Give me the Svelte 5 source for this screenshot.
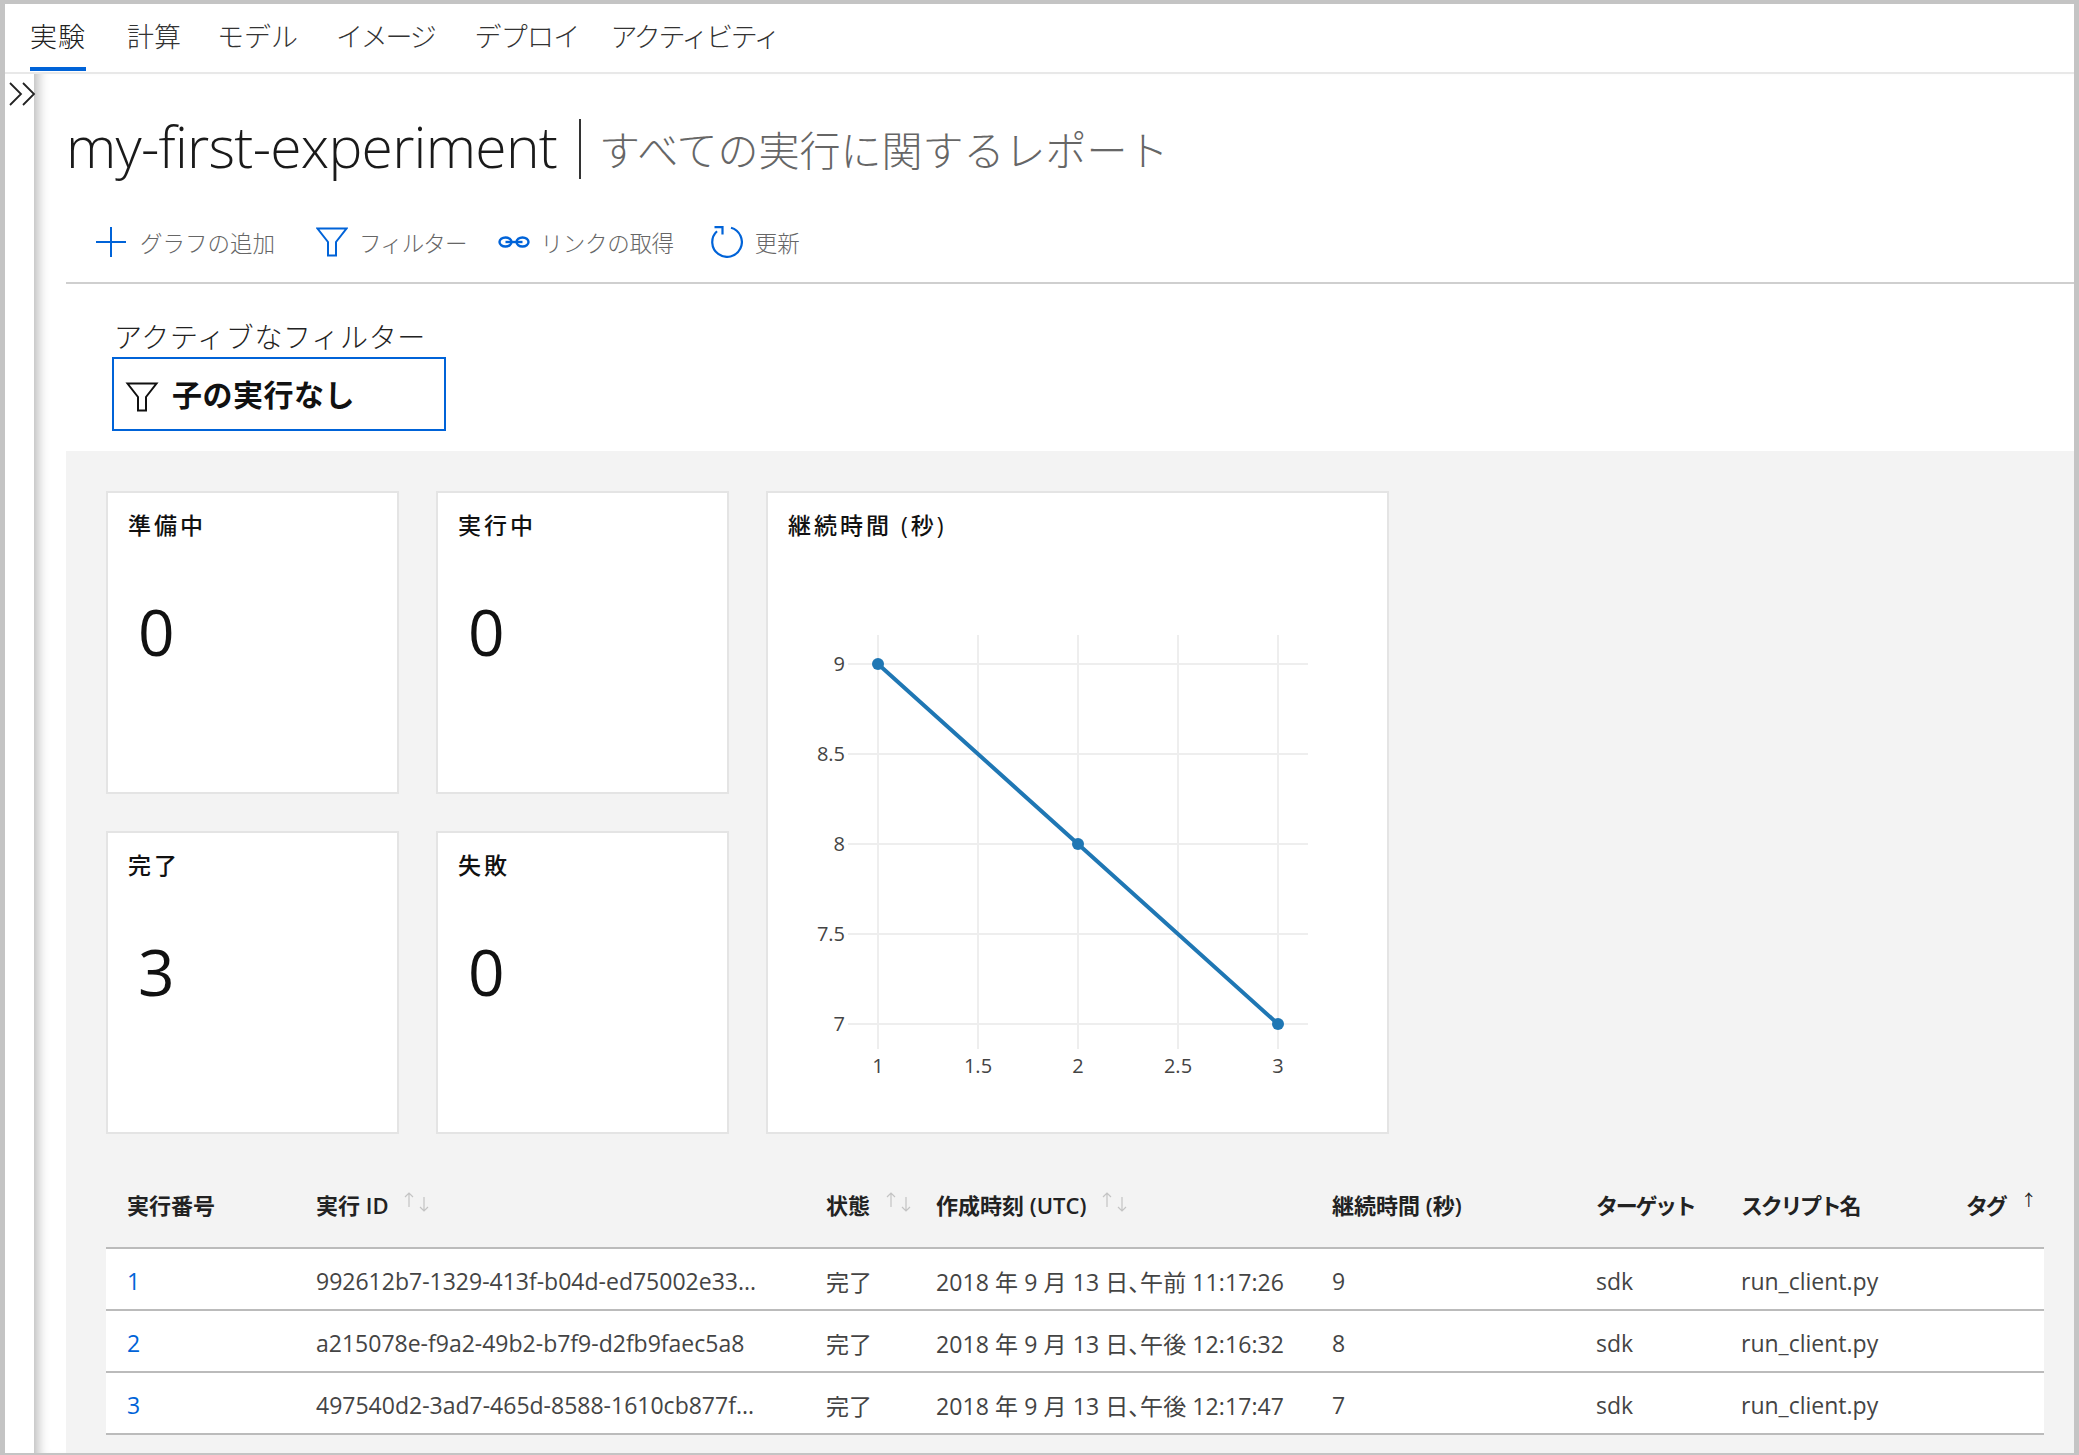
<script>
	// ls / gap tune each tab to the width it has in the product font
	const nav = [
		{ label: '実験', ls: 1, gap: 41 },
		{ label: '計算', ls: 0, gap: 36 },
		{ label: 'モデル', ls: 0, gap: 38 },
		{ label: 'イメージ', ls: -2.25, gap: 40 },
		{ label: 'デプロイ', ls: -0.75, gap: 31 },
		{ label: 'アクティビティ', ls: -2.35, gap: 0 }
	];
	const stats = [
		{ label: '準備中', value: 0 },
		{ label: '実行中', value: 0 },
		{ label: '完了', value: 3 },
		{ label: '失敗', value: 0 }
	];
	const runs = [
		{ no: 1, id: '992612b7-1329-413f-b04d-ed75002e33...', date: '2018 年 9 月 13 日、午前 11:17:26', secs: 9 },
		{ no: 2, id: 'a215078e-f9a2-49b2-b7f9-d2fb9faec5a8', date: '2018 年 9 月 13 日、午後 12:16:32', secs: 8 },
		{ no: 3, id: '497540d2-3ad7-465d-8588-1610cb877f...', date: '2018 年 9 月 13 日、午後 12:17:47', secs: 7 }
	];

	// chart geometry, in px inside the svg
	const xs = [
		{ label: '1', x: 112 },
		{ label: '1.5', x: 212 },
		{ label: '2', x: 312 },
		{ label: '2.5', x: 412 },
		{ label: '3', x: 512 }
	];
	const ys = [
		{ label: '9', y: 45 },
		{ label: '8.5', y: 135 },
		{ label: '8', y: 225 },
		{ label: '7.5', y: 315 },
		{ label: '7', y: 405 }
	];
	const points = [
		[112, 45],
		[312, 225],
		[512, 405]
	];
</script>

{#snippet funnel(cls)}
	<svg class={cls} viewBox="0 0 32 30" fill="none" stroke="currentColor" stroke-width="2">
		<path d="M1.5 1.5h29L20 15v13.5h-8V15z" />
	</svg>
{/snippet}

{#snippet sorter()}
	<svg class="sorter" viewBox="0 0 25 20" fill="none" stroke="#c4c4c4" stroke-width="1.2">
		<path d="M5 15V1M1 5l4-4 4 4M20 5v14M16 15l4 4 4-4" />
	</svg>
{/snippet}

<div class="frame">
	<nav class="tabs">
		{#each nav as item, i}
			<span class="tab" class:active={i === 0} style="letter-spacing:{item.ls}px;margin-right:{item.gap}px">{item.label}</span>
		{/each}
	</nav>

	<div class="body">
		<aside class="rail">
			<svg class="chevrons" viewBox="0 0 27 24" fill="none" stroke="#222" stroke-width="1.8">
				<path d="M1 1l11 11L1 23M14 1l11 11-11 11" />
			</svg>
		</aside>

		<main class="main">
			<h1 class="title">
				<span class="name">my-first-experiment</span>
				<span class="bar"></span>
				<span class="sub">すべての実行に関するレポート</span>
			</h1>

			<div class="toolbar">
				<button class="tool add">
					<svg viewBox="0 0 30 30" fill="none" stroke="currentColor" stroke-width="2"><path d="M15 0v30M0 15h30" /></svg>
					<span>グラフの追加</span>
				</button>
				<button class="tool filter">
					{@render funnel('tool-funnel')}
					<span>フィルター</span>
				</button>
				<button class="tool link">
					<svg viewBox="0 0 32 12" fill="none" stroke="currentColor" stroke-width="2.4">
						<ellipse cx="7.5" cy="6" rx="6" ry="4.5" />
						<ellipse cx="24.5" cy="6" rx="6" ry="4.5" />
						<path d="M7.5 6h17" />
					</svg>
					<span>リンクの取得</span>
				</button>
				<button class="tool refresh">
					<svg viewBox="0 0 32 32" fill="none" stroke="currentColor" stroke-width="2.2">
						<path d="M20 1.8A14.8 14.8 0 1 1 6 5.2" />
						<path d="M3.5 1.2h8V8.5" />
					</svg>
					<span>更新</span>
				</button>
			</div>

			<section class="active-filters">
				<div class="af-label">アクティブなフィルター</div>
				<div class="af-box">
					{@render funnel('af-funnel')}
					<span>子の実行なし</span>
				</div>
			</section>

			<section class="panel">
				<div class="cards">
					{#each stats as s}
						<div class="card">
							<div class="card-title">{s.label}</div>
							<div class="card-value">{s.value}</div>
						</div>
					{/each}
					<div class="card chart">
						<div class="card-title">継続時間 (秒)</div>
						<svg class="plot" viewBox="0 0 560 470" width="560" height="470">
							{#each xs as t}
								<line x1={t.x} x2={t.x} y1="16" y2="430" class="grid" />
								<text x={t.x} y="454" text-anchor="middle">{t.label}</text>
							{/each}
							{#each ys as t}
								<line x1="82" x2="542" y1={t.y} y2={t.y} class="grid" />
								<text x="79" y={t.y + 7} text-anchor="end">{t.label}</text>
							{/each}
							<polyline points={points.map((p) => p.join(',')).join(' ')} class="trace" />
							{#each points as p}
								<circle cx={p[0]} cy={p[1]} r="6" fill="#1f77b4" />
							{/each}
						</svg>
					</div>
				</div>

				<table class="runs">
					<colgroup>
						<col style="width:210px" />
						<col style="width:510px" />
						<col style="width:110px" />
						<col style="width:396px" />
						<col style="width:264px" />
						<col style="width:145px" />
						<col style="width:225px" />
						<col />
					</colgroup>
					<thead>
						<tr>
							<th>実行番号</th>
							<th>実行 ID {@render sorter()}</th>
							<th>状態 {@render sorter()}</th>
							<th>作成時刻 (UTC) {@render sorter()}</th>
							<th>継続時間 (秒)</th>
							<th class="kana">ターゲット</th>
							<th class="kana">スクリプト名</th>
							<th class="tag kana">タグ <span class="up">↑</span></th>
						</tr>
					</thead>
					<tbody>
						{#each runs as r}
							<tr>
								<td class="no">{r.no}</td>
								<td>{r.id}</td>
								<td>完了</td>
								<td class="date">{r.date}</td>
								<td>{r.secs}</td>
								<td>sdk</td>
								<td>run_client.py</td>
								<td></td>
							</tr>
						{/each}
					</tbody>
				</table>
			</section>
		</main>
	</div>
</div>

<style>
	:global(body) {
		margin: 0;
		background: #fff;
	}
	.frame {
		box-sizing: border-box;
		width: 2079px;
		height: 1455px;
		border: solid #c4c4c4;
		border-width: 4px 5px 2px 5px;
		display: flex;
		flex-direction: column;
		overflow: hidden;
		font-family: 'Open Sans', 'Noto Sans CJK JP', sans-serif;
		color: #222;
	}
	.tabs {
		flex: none;
		height: 68px;
		display: flex;
		padding-left: 25px;
		border-bottom: 2px solid #e8e8e8;
	}
	.tab {
		box-sizing: border-box;
		height: 67px;
		line-height: 66px;
		font-size: 27px;
		font-weight: 300;
		color: #333;
		white-space: nowrap;
	}
	.tab.active {
		border-bottom: 4px solid #0063d8;
		color: #222;
	}
	.body {
		flex: 1;
		display: flex;
		min-height: 0;
	}
	.rail {
		flex: none;
		width: 29px;
		position: relative;
	}
	.chevrons {
		position: absolute;
		left: 4px;
		top: 8px;
		width: 27px;
		height: 24px;
	}
	.main {
		flex: 1;
		min-width: 0;
		padding-left: 32px;
		box-shadow: inset 14px 0 12px -10px rgba(0, 0, 0, 0.28);
		display: flex;
		flex-direction: column;
	}
	.title {
		box-sizing: border-box;
		margin: 0;
		height: 128px;
		padding-top: 16px;
		display: flex;
		align-items: center;
		gap: 14px;
		font-weight: 300;
		white-space: nowrap;
	}
	.name {
		font-size: 57px;
		letter-spacing: -0.75px;
		color: #1a1a1a;
	}
	.bar {
		width: 2px;
		height: 60px;
		background: #333;
		margin: 5px 4px 0 8px;
	}
	.sub {
		font-size: 41px;
		color: #666;
		margin-top: 4px;
	}
	.toolbar {
		height: 82px;
		box-sizing: border-box;
		border-bottom: 2px solid #cfcfcf;
		display: flex;
		align-items: center;
		padding: 0;
		padding-left: 30px;
	}
	.tool {
		appearance: none;
		border: none;
		background: none;
		padding: 0;
		font: inherit;
		font-size: 22.5px;
		font-weight: 300;
		color: #666;
		display: flex;
		align-items: center;
		white-space: nowrap;
	}
	.tool svg {
		color: #0063d8;
		flex: none;
	}
	.add svg {
		width: 30px;
		height: 30px;
		margin-right: 14px;
	}
	.filter {
		margin-left: 41px;
		letter-spacing: -0.9px;
	}
	.tool-funnel {
		width: 32px;
		height: 30px;
		margin-right: 11px;
	}
	.link {
		margin-left: 31px;
		letter-spacing: -0.3px;
	}
	.link svg {
		width: 32px;
		height: 12px;
		margin-right: 11px;
	}
	.refresh {
		margin-left: 37px;
	}
	.refresh svg {
		width: 32px;
		height: 32px;
		margin-right: 12px;
	}
	.active-filters {
		height: 167px;
		box-sizing: border-box;
		padding: 35px 0 0 46px;
	}
	.af-label {
		font-size: 28px;
		line-height: 36px;
		font-weight: 300;
		letter-spacing: 0.7px;
		color: #222;
		padding-left: 2px;
	}
	.af-box {
		box-sizing: border-box;
		width: 334px;
		height: 74px;
		margin-top: 2px;
		border: 2px solid #0063d8;
		display: flex;
		align-items: center;
		padding: 0 0 3px 11px;
		font-size: 30px;
		font-weight: 700;
		letter-spacing: 0.5px;
		color: #111;
	}
	.af-funnel {
		width: 34px;
		height: 30px;
		margin: 9px 13px 0 0;
		color: #111;
		flex: none;
	}
	.panel {
		flex: 1;
		background: #f3f3f3;
		padding: 40px 30px 0 40px;
	}
	.cards {
		display: grid;
		grid-template-columns: 293px 293px 623px;
		grid-template-rows: 303px 303px;
		gap: 37px;
	}
	.card {
		box-sizing: border-box;
		background: #fff;
		border: 2px solid #e4e4e4;
		padding: 17px 20px;
	}
	.card-title {
		font-size: 23px;
		line-height: 30px;
		font-weight: 500;
		letter-spacing: 3px;
		color: #111;
	}
	.card-value {
		font-size: 64px;
		line-height: 90px;
		margin: 47px 0 0 10px;
		color: #111;
	}
	.chart {
		grid-column: 3;
		grid-row: 1 / span 2;
	}
	.plot {
		display: block;
		margin: 79px 0 0 -22px;
	}
	.plot text {
		font-size: 20px;
		fill: #444;
	}
	.grid {
		stroke: #eee;
		stroke-width: 2;
	}
	.trace {
		fill: none;
		stroke: #1f77b4;
		stroke-width: 4;
	}
	.runs {
		margin-top: 29px;
		width: 1938px;
		table-layout: fixed;
		border-collapse: collapse;
	}
	th {
		height: 85px;
		box-sizing: border-box;
		text-align: left;
		padding: 0 0 2px 0;
		font-size: 22px;
		font-weight: 600;
		color: #222;
		white-space: nowrap;
		border-bottom: 2px solid #bbb;
	}
	th.kana {
		letter-spacing: -2.3px;
	}
	th:first-child,
	td:first-child {
		padding-left: 21px;
	}
	.sorter {
		width: 25px;
		height: 20px;
		margin: -10px 0 -10px 10px;
		vertical-align: middle;
		position: relative;
		top: -6px;
	}
	.up {
		font-weight: 400;
		font-size: 16px;
		vertical-align: 8px;
		line-height: 0;
		margin-left: 12px;
		letter-spacing: 0;
	}
	td {
		background: #fff;
		height: 62px;
		box-sizing: border-box;
		padding: 3px 0 0 0;
		font-size: 23px;
		color: #444;
		white-space: nowrap;
		border-bottom: 2px solid #bbb;
	}
	.date {
		font-feature-settings: 'palt';
		letter-spacing: 0.1px;
	}
	.no {
		color: #0063d8;
	}
</style>
